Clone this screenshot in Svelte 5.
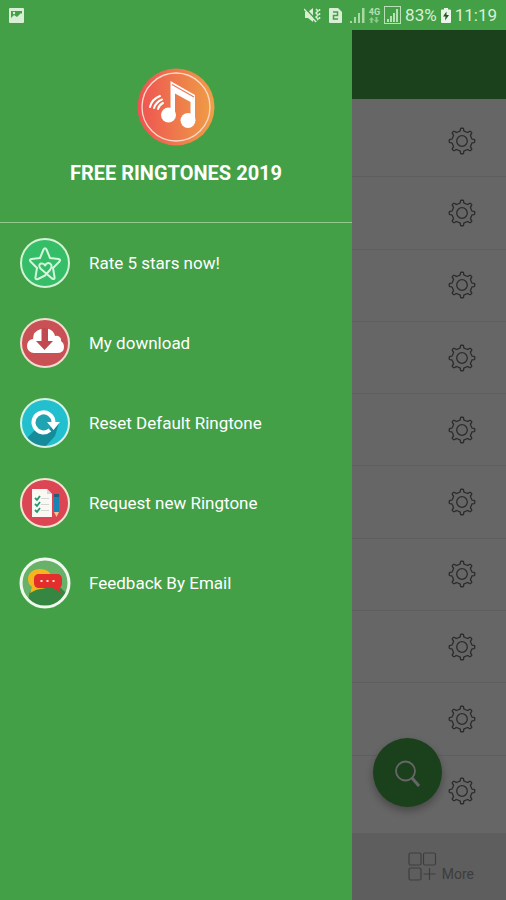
<script>
  const rows = Array.from({ length: 10 }, (_, i) => i + 1);

  const menu = [
    { id: 'rate', label: 'Rate 5 stars now!' },
    { id: 'download', label: 'My download' },
    { id: 'reset', label: 'Reset Default Ringtone' },
    { id: 'request', label: 'Request new Ringtone' },
    { id: 'feedback', label: 'Feedback By Email' }
  ];

  // outline of an eight tooth gear in a 28x28 box
  function gearPath(teeth = 8, outer = 12.8, inner = 10) {
    const step = (Math.PI * 2) / teeth;
    const points = [];
    for (let i = 0; i < teeth; i++) {
      const a = i * step - Math.PI / 2;
      for (const [offset, r] of [[-0.36, inner], [-0.22, inner + 0.3], [-0.16, outer - 0.6], [-0.09, outer], [0.09, outer], [0.16, outer - 0.6], [0.22, inner + 0.3], [0.36, inner]]) {
        const t = a + offset * step;
        points.push(`${(14 + r * Math.cos(t)).toFixed(2)} ${(14 + r * Math.sin(t)).toFixed(2)}`);
      }
    }
    return `M${points.join('L')}Z`;
  }

  const gear = gearPath();
</script>

<div class="screen">
  <div class="statusbar">
    <svg class="picture" width="15" height="15" viewBox="0 0 15 15" aria-hidden="true">
      <path fill="#d9efd5" fill-rule="evenodd" d="M1 0h13a1 1 0 0 1 1 1v13a1 1 0 0 1-1 1H1a1 1 0 0 1-1-1V1a1 1 0 0 1 1-1zM2 3v7l3-3 3 2 4-4 1 1V3z" />
      <circle cx="5" cy="5" r="1.2" fill="#d9efd5" />
    </svg>
    <div class="signals">
      <svg width="17" height="16" viewBox="0 0 17 16" aria-hidden="true">
        <path fill="#d9efd5" d="M1 5h3l5-4v14l-5-4H1z" />
        <path fill="none" stroke="#d9efd5" stroke-width="1.5" d="M12 2l2 2-2 2 2 2-2 2 2 2-2 2M15.500 2v2M15.500 6v2M15.500 10v2" />
        <path stroke="#43a047" stroke-width="1.500" d="M1 1l12 13" />
        <path stroke="#d9efd5" stroke-width="1.300" d="M0 2l12 13" />
      </svg>
      <svg class="sim" width="13" height="15" viewBox="0 0 13 15" aria-hidden="true">
        <path fill="#d9efd5" d="M1 0h8l4 4v10a1 1 0 0 1-1 1H1a1 1 0 0 1-1-1V1a1 1 0 0 1 1-1z" />
        <path fill="none" stroke="#43a047" stroke-width="1.5" d="M4 4h4.500v3.500H4.500V11H9" />
      </svg>
      <svg width="15" height="16" viewBox="0 0 15 16" aria-hidden="true">
        <path fill="#a9d8a5" d="M0 14h2v2H0zM4 10h2v6H4zM8 6h2v10H8zM12 1h2.500v15H12z" />
      </svg>
      <div class="network">
        <span>4G</span>
        <svg width="10" height="6" viewBox="0 0 10 6" aria-hidden="true">
          <path fill="#8fca8c" d="M2.500 0L5 3H3.500v3h-2V3H0zM7.500 6L5 3h1.500V0h2v3H10z" />
        </svg>
      </div>
      <svg width="17" height="18" viewBox="0 0 17 18" aria-hidden="true">
        <rect x="0.5" y="0.5" width="16" height="17" fill="none" stroke="#b9dfb5" />
        <path fill="#b9dfb5" d="M3 13h2v3H3zM6 10h2v6H6zM9 7h2v9H9zM12 3h2v13h-2z" />
      </svg>
      <span class="status-text">83%</span>
      <svg width="10" height="15" viewBox="0 0 10 15" aria-hidden="true">
        <path fill="#eaf7e8" d="M3 0h4v1.500h2a1 1 0 0 1 1 1V14a1 1 0 0 1-1 1H1a1 1 0 0 1-1-1V2.500a1 1 0 0 1 1-1h2z" />
        <path fill="#235626" d="M5.500 3.500L2 8.500h2.500L4 12.500l4-5.500H5.500z" />
      </svg>
      <span class="status-text">11:19</span>
    </div>
  </div>

  <div class="app">
    <header class="toolbar"></header>
    <div class="list">
      {#each rows as row}
        <div class="row">
          <button class="settings" aria-label="Ringtone {row} settings">
            <svg width="28" height="28" viewBox="0 0 28 28" aria-hidden="true">
              <path d={gear} />
              <circle cx="14" cy="14" r="5.300" />
            </svg>
          </button>
        </div>
      {/each}
      <button class="fab" aria-label="Search">
        <svg width="28" height="28" viewBox="0 0 28 28" aria-hidden="true">
          <circle cx="11.500" cy="12" r="9.500" fill="none" stroke="#fff" stroke-width="1.8" />
          <path d="M18 19l7 8" stroke="#fff" stroke-width="3" />
        </svg>
      </button>
    </div>
    <nav class="tabs">
      <a class="tab" href="#more">
        <svg width="29" height="30" viewBox="0 0 29 30" aria-hidden="true">
          <g fill="none" stroke="#999" stroke-width="1.200">
            <rect x="1" y="1" width="12" height="12" rx="1.500" />
            <rect x="15.500" y="1" width="12" height="12" rx="1.500" />
            <rect x="1" y="16" width="12" height="12" rx="1.500" />
            <path d="M21.500 16v12M15.500 22h12" />
          </g>
        </svg>
        <span>More</span>
      </a>
    </nav>
    <div class="scrim"></div>

    <aside class="drawer">
      <div class="drawer-header">
        <svg width="78" height="78" viewBox="0 0 78 78" aria-hidden="true">
          <defs>
            <linearGradient id="logo-fill" x1="0" y1="0" x2="1" y2="0">
              <stop offset="0" stop-color="#ee5253" />
              <stop offset="1" stop-color="#ef9f45" />
            </linearGradient>
          </defs>
          <circle cx="39" cy="39" r="38.500" fill="url(#logo-fill)" />
          <circle cx="39" cy="39" r="34" fill="none" stroke="#fbd9cd" stroke-width="1.300" />
          <g fill="#fff">
            <circle cx="31.500" cy="47" r="7.500" />
            <circle cx="51" cy="52.500" r="7.500" />
            <path d="M33.500 13L58 27V53h-4.500V34L38 25.500v22h-4.500z" />
          </g>
          <path d="M35 16.500l22 12.500" stroke="#f0785a" stroke-width="1.200" />
          <g fill="none" stroke="#fff" stroke-width="2" stroke-linecap="round">
            <path d="M13 39q2-8 10-11" />
            <path d="M17 40q2-6 8-8.500" />
            <path d="M21 41q1-4 5-6" />
          </g>
        </svg>
        <h1>FREE RINGTONES 2019</h1>
      </div>
      <ul class="menu">
        {#each menu as item}
          <li>
            <a href="#{item.id}">
              <svg width="52" height="52" viewBox="0 0 52 52" aria-hidden="true">
                {#if item.id === 'rate'}
                  <circle cx="26" cy="26" r="24" fill="#35bd68" stroke="#d3f3d5" stroke-width="2" />
                  <g fill="none" stroke="#d3f6dc" stroke-width="2" stroke-linejoin="round" stroke-linecap="round">
                    <path d="M26 38.500L19 42Q16 43 16.500 40L18 31L11.500 24.500Q10 22.500 12.500 22L21 21L24.500 12.500Q26 10 27.500 12.500L31 21L39.500 22Q42 22.500 40.500 24.500L34 31L35.500 40Q36 43 33 41.500L22 32Q18.500 28 22 26.500Q25 26 26 28.500Q28 25 31 26.500Q34 28.500 31 33L26 38.500" />
                  </g>
                {:else if item.id === 'download'}
                  <circle cx="26" cy="26" r="24" fill="#c95055" stroke="#f1ddd0" stroke-width="2" />
                  <path fill="#fff" d="M15 36a7 7 0 0 1-7-7q0-6 6-7 0-8 8-10 5-1 8 0 5 2 6 7 4-1 6 3 0 2 0 2 3 2 3 6 0 6-7 6z" />
                  <path fill="#c04a50" d="M22.500 11h6.500v13h5l-8.500 9-8.500-9h5.500z" />
                {:else if item.id === 'reset'}
                  <circle cx="26" cy="26" r="24" fill="#22bfce" />
                  <path fill="#168b99" d="M17 32L8 41a24 24 0 0 0 18 9L36 39 40 26 20 20z" />
                  <circle cx="26" cy="26" r="24" fill="none" stroke="#d7f3e6" stroke-width="2" />
                  <circle cx="24.500" cy="25.500" r="9" fill="#20a4b2" />
                  <path fill="none" stroke="#fff" stroke-width="4" d="M31 33a10 10 0 1 1 3.500-8" />
                  <path fill="#fff" d="M28 25h13l-6.500 8z" />
                {:else if item.id === 'request'}
                  <circle cx="26" cy="26" r="24" fill="#db4554" stroke="#f2e4d2" stroke-width="2" />
                  <path fill="#f9f8f2" d="M13 12h15l5 5v23H13z" />
                  <path fill="#d6d5d5" d="M28 12v5h5zM22 21h8v1h-8zM22 27h8v1h-8zM22 33h8v1h-8z" />
                  <path fill="none" stroke="#239672" stroke-width="1.800" d="M16 21l2 2 3-4M16 27l2 2 3-4M16 33l2 2 3-4" />
                  <path fill="#1684b4" d="M35 20h5v15h-5z" />
                  <path fill="#285c73" d="M35 17h5v3h-5z" />
                  <path fill="#f1c58f" d="M35 35h5L37.500 40z" />
                {:else}
                  <circle cx="26" cy="26" r="24" fill="#67b168" />
                  <path fill="#358641" d="M11 34l-2 9a24 24 0 0 0 36 0l2-7-7-7-22 1z" />
                  <circle cx="26" cy="26" r="24" fill="none" stroke="#eff8ec" stroke-width="3" />
                  <path fill="#f4b51e" d="M21 12c7 0 12 4 12 10s-5 10-12 10l-4 1-6 3 2-6c-3-2-4-5-4-8 0-6 5-10 12-10z" />
                  <path fill="#e42e2c" d="M20 17h18c3 0 5 2 5 5v4q0 4-3 5l2 5-8-5H20c-3 0-5-2-5-5v-4c0-3 2-5 5-5z" />
                  <path fill="#ffe0d5" d="M21.500 23h2v2h-2zM27.500 23h2v2h-2zM33.500 23h2v2h-2z" />
                {/if}
              </svg>
              <span>{item.label}</span>
            </a>
          </li>
        {/each}
      </ul>
    </aside>
  </div>
</div>

<style>
:global(body) {
  margin: 0;
  font-family: Roboto, "Liberation Sans", sans-serif;
}
.screen {
  min-height: 100vh;
  display: flex;
  flex-direction: column;
  background: #fff;
}
.statusbar {
  height: 30px;
  padding: 0 9px;
  display: flex;
  align-items: center;
  justify-content: space-between;
  background: #43a047;
}
.signals {
  display: flex;
  align-items: center;
  gap: 4px;
}
.sim {
  margin: 0 4px;
}
.network {
  display: flex;
  flex-direction: column;
  align-items: center;
  gap: 1px;
  font-size: 9px;
  line-height: 8px;
  font-weight: 700;
  color: #b9dfb5;
}
.status-text {
  font-size: 17px;
  line-height: 24px;
  color: #d9efd5;
}
.app {
  flex: 1;
  position: relative;
  display: flex;
  flex-direction: column;
}
.toolbar {
  height: 69px;
  background: #43a047;
}
.list {
  flex: 1;
  position: relative;
  display: flex;
  flex-direction: column;
  padding: 6px 0;
}
.row {
  flex: 1;
  min-height: 56px;
  box-sizing: border-box;
  display: flex;
  align-items: center;
  justify-content: flex-end;
  padding-right: 30px;
  border-bottom: 1px solid #ebebeb;
}
.row:nth-child(10) {
  border-bottom: none;
}
.settings {
  display: flex;
  padding: 0;
  border: none;
  background: none;
  cursor: pointer;
}
.settings path,
.settings circle {
  fill: none;
  stroke: #6c6c6c;
  stroke-width: 1.3;
}
.fab {
  position: absolute;
  right: 64px;
  bottom: 26px;
  width: 69px;
  height: 69px;
  display: flex;
  align-items: center;
  justify-content: center;
  padding: 0;
  border: none;
  border-radius: 50%;
  background: #43a047;
  box-shadow: 0 4px 8px rgba(0, 0, 0, 0.3);
  cursor: pointer;
}
.tabs {
  height: 67px;
  display: flex;
  align-items: center;
  justify-content: flex-end;
  padding-right: 32px;
  box-sizing: border-box;
  background: #ebebeb;
}
.tab {
  display: flex;
  align-items: flex-end;
  gap: 5px;
  font-size: 14px;
  line-height: 16px;
  color: #999;
  text-decoration: none;
}
.scrim {
  position: absolute;
  inset: 0;
  background: rgba(0, 0, 0, 0.6);
}
.drawer {
  position: absolute;
  top: 0;
  bottom: 0;
  left: 0;
  width: 352px;
  max-width: 80%;
  background: #43a047;
  color: #fff;
}
.drawer-header {
  display: flex;
  flex-direction: column;
  align-items: center;
  padding: 38px 16px 37px;
  border-bottom: 1px solid #92cb92;
}
h1 {
  margin: 15px 0 0;
  font-size: 20px;
  line-height: 24px;
  font-weight: 700;
}
.menu {
  list-style: none;
  margin: 0;
  padding: 0;
}
.menu a {
  height: 80px;
  display: flex;
  align-items: center;
  gap: 18px;
  padding: 0 19px;
  font-size: 17px;
  line-height: 24px;
  color: #fff;
  text-decoration: none;
}
</style>
